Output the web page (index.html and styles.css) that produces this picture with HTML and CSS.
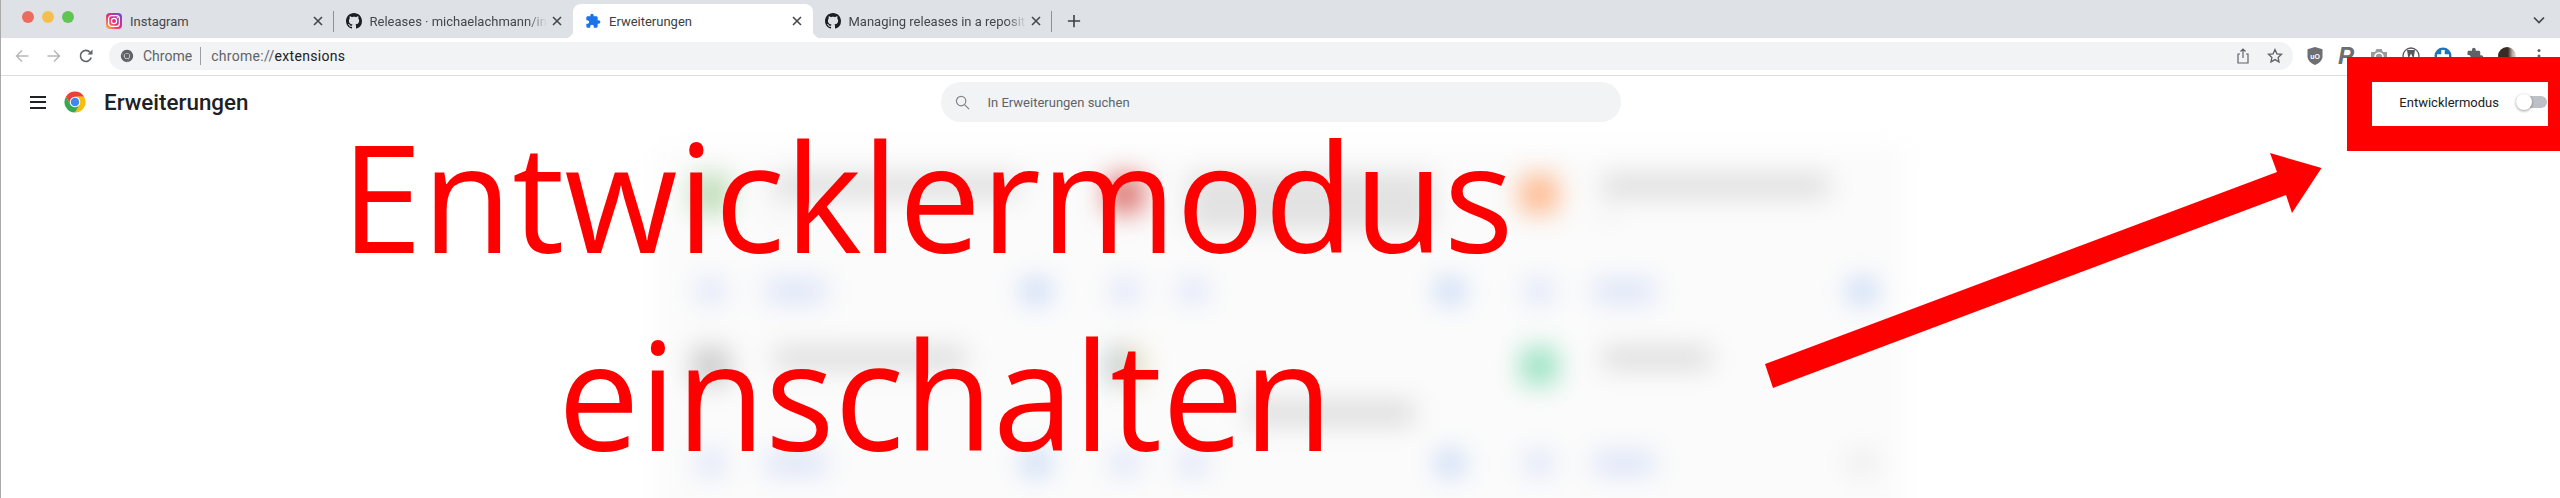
FILE: index.html
```html
<!DOCTYPE html>
<html lang="de">
<head>
    <meta charset="UTF-8">
    <title>Erweiterungen</title>
    <link rel="stylesheet" href="styles.css">
</head>
<body>

    <!-- shared icons -->
    <svg class="defs" width="0" height="0">
        <symbol id="github" viewBox="0 0 16 16">
            <path d="M8 0C3.58 0 0 3.58 0 8c0 3.54 2.29 6.53 5.47 7.59.4.07.55-.17.55-.38 0-.19-.01-.82-.01-1.49-2.01.37-2.53-.49-2.69-.94-.09-.23-.48-.94-.82-1.13-.28-.15-.68-.52-.01-.53.63-.01 1.08.58 1.23.82.72 1.21 1.87.87 2.33.66.07-.52.28-.87.51-1.07-1.78-.2-3.64-.89-3.64-3.95 0-.87.31-1.59.82-2.15-.08-.2-.36-1.02.08-2.12 0 0 .67-.21 2.2.82.64-.18 1.32-.27 2-.27.68 0 1.36.09 2 .27 1.53-1.04 2.2-.82 2.2-.82.44 1.1.16 1.92.08 2.12.51.56.82 1.27.82 2.15 0 3.07-1.87 3.75-3.65 3.95.29.25.54.73.54 1.48 0 1.07-.01 1.93-.01 2.2 0 .21.15.46.55.38A8.013 8.013 0 0016 8c0-4.42-3.58-8-8-8z"/>
        </symbol>
        <symbol id="puzzle" viewBox="0 0 24 24">
            <path d="M20.5 11H19V7c0-1.1-.9-2-2-2h-4V3.5C13 2.12 11.88 1 10.5 1S8 2.12 8 3.5V5H4c-1.1 0-1.99.9-1.99 2v3.8H3.5c1.49 0 2.7 1.21 2.7 2.7s-1.21 2.7-2.7 2.7H2V20c0 1.1.9 2 2 2h3.8v-1.5c0-1.49 1.21-2.7 2.7-2.7 1.49 0 2.7 1.21 2.7 2.7V22H17c1.1 0 2-.9 2-2v-4h1.5c1.38 0 2.5-1.12 2.5-2.5S21.88 11 20.5 11z"/>
        </symbol>
        <symbol id="close" viewBox="0 0 16 16">
            <path d="M4 4l8 8M12 4l-8 8" fill="none" stroke="currentColor" stroke-width="1.6"/>
        </symbol>
        <symbol id="chrome" viewBox="0 0 48 48">
            <path class="c-red" d="M24 13.5H42.2A21 21 0 0 0 5.8 13.5L14.91 29.25A10.5 10.5 0 0 1 24 13.5z"/>
            <path class="c-yellow" d="M33.09 29.25L24 45A21 21 0 0 0 42.2 13.5H24A10.5 10.5 0 0 1 33.09 29.25z"/>
            <path class="c-green" d="M14.91 29.25L5.8 13.5A21 21 0 0 0 24 45L33.09 29.25A10.5 10.5 0 0 1 14.91 29.25z"/>
            <circle class="c-blue" cx="24" cy="24" r="8.5"/>
        </symbol>
    </svg>

    <div class="window">

        <!-- tab strip -->
        <div class="tabstrip">
            <div class="lights">
                <span class="light red"></span>
                <span class="light yellow"></span>
                <span class="light green"></span>
            </div>
            <div class="tab sep">
                <svg class="favicon" viewBox="0 0 16 16">
                    <defs>
                        <linearGradient id="insta" x1="0" y1="1" x2="1" y2="0">
                            <stop offset="0" stop-color="#fdc03c"/>
                            <stop offset=".45" stop-color="#ee2a7b"/>
                            <stop offset="1" stop-color="#5b51d8"/>
                        </linearGradient>
                    </defs>
                    <rect width="16" height="16" rx="4" fill="url(#insta)"/>
                    <rect x="2.6" y="2.6" width="10.8" height="10.8" rx="3" fill="none" stroke="#fff" stroke-width="1.2"/>
                    <circle cx="8" cy="8" r="2.6" fill="none" stroke="#fff" stroke-width="1.2"/>
                    <circle cx="11.4" cy="4.6" r=".7" fill="#fff"/>
                </svg>
                <span class="tab-title plain">Instagram</span>
                <svg class="tab-close"><use href="#close"/></svg>
            </div>
            <div class="tab">
                <svg class="favicon"><use href="#github"/></svg>
                <span class="tab-title">Releases · michaelachmann/ins</span>
                <svg class="tab-close"><use href="#close"/></svg>
            </div>
            <div class="tab active">
                <svg class="favicon puzzle-fav"><use href="#puzzle"/></svg>
                <span class="tab-title plain">Erweiterungen</span>
                <svg class="tab-close"><use href="#close"/></svg>
            </div>
            <div class="tab sep">
                <svg class="favicon"><use href="#github"/></svg>
                <span class="tab-title">Managing releases in a reposit</span>
                <svg class="tab-close"><use href="#close"/></svg>
            </div>
            <svg class="newtab" viewBox="0 0 16 16"><path d="M8 1v14M1 8h14" fill="none" stroke="#3c4043" stroke-width="1.8"/></svg>
            <svg class="tabmenu" viewBox="0 0 16 16"><path d="M3 5.5l5 5 5-5" fill="none" stroke="#45474a" stroke-width="1.7"/></svg>
        </div>

        <!-- toolbar -->
        <div class="toolbar">
            <svg class="tool off" viewBox="0 0 16 16"><path d="M14.5 8H2.5M8 2.5L2.5 8 8 13.5" fill="none" stroke="currentColor" stroke-width="1.5"/></svg>
            <svg class="tool off" viewBox="0 0 16 16"><path d="M1.5 8h12M8 2.5L13.5 8 8 13.5" fill="none" stroke="currentColor" stroke-width="1.5"/></svg>
            <svg class="tool" viewBox="0 0 16 16"><path d="M13.2 9.5A5.5 5.5 0 1 1 12 4.2" fill="none" stroke="currentColor" stroke-width="1.6"/><path d="M14.5 1.5v5h-5z" fill="currentColor"/></svg>

            <div class="omnibox">
                <svg class="omni-icon"><use href="#chrome"/></svg>
                <span class="omni-origin">Chrome</span>
                <span class="omni-url">chrome://<b>extensions</b></span>
                <svg class="omni-action" viewBox="0 0 16 16"><path d="M5 6H3v9h10V6h-2M8 10V1M5.5 3.5L8 1l2.5 2.5" fill="none" stroke="currentColor" stroke-width="1.2"/></svg>
                <svg class="omni-action star" viewBox="0 0 16 16"><path d="M8 1.6l1.9 4.2 4.6.5-3.4 3.1.9 4.5-4-2.3-4 2.3.9-4.5L1.5 6.3l4.6-.5z" fill="none" stroke="currentColor" stroke-width="1.3"/></svg>
            </div>

            <div class="ext-icons">
                <svg class="ext" viewBox="0 0 18 18">
                    <path d="M9 0l7.5 2.2v7c0 4-3.2 7-7.5 8.8C4.7 16.2 1.5 13.2 1.5 9.2v-7z" fill="#6d6f72"/>
                    <text class="ublock" x="9" y="11.5">uO</text>
                </svg>
                <span class="ext ext-p">P</span>
                <svg class="ext" viewBox="0 0 18 18">
                    <path d="M1 5h4l1.5-3h5L13 5h4v12H1z" fill="#9a9c9f"/>
                    <circle cx="9" cy="10" r="4" fill="none" stroke="#fff" stroke-width="1.6"/>
                </svg>
                <svg class="ext" viewBox="0 0 18 18">
                    <circle cx="9" cy="9" r="8" fill="#fff" stroke="#55585c" stroke-width="1.3"/>
                    <path d="M5 3l1.5 9L9 6.5 11.5 12 13 3z" fill="#55585c"/>
                </svg>
                <svg class="ext" viewBox="0 0 18 18">
                    <circle cx="9" cy="9" r="8.5" fill="#1f74bd"/>
                    <path d="M9 3v12M3 9h12" stroke="#fff" stroke-width="3.5"/>
                </svg>
                <svg class="ext ext-puzzle"><use href="#puzzle"/></svg>
                <div class="ext avatar"></div>
                <svg class="ext dots" viewBox="0 0 18 18">
                    <circle cx="9" cy="3.5" r="1.5"/><circle cx="9" cy="9" r="1.5"/><circle cx="9" cy="14.5" r="1.5"/>
                </svg>
            </div>
        </div>

        <!-- extensions page -->
        <div class="page">
            <header class="page-head">
                <div class="head-left">
                    <div class="burger"><span></span><span></span><span></span></div>
                    <svg class="logo"><use href="#chrome"/></svg>
                    <h1>Erweiterungen</h1>
                </div>
                <div class="search">
                    <svg class="search-icon" viewBox="0 0 16 16"><circle cx="6.5" cy="6.5" r="5" fill="none" stroke="currentColor" stroke-width="1.3"/><path d="M10.2 10.2L15 15" stroke="currentColor" stroke-width="1.3"/></svg>
                    <span>In Erweiterungen suchen</span>
                </div>
                <div class="head-right">
                    <span>Entwicklermodus</span>
                    <div class="toggle"><div class="knob"></div></div>
                </div>
            </header>

            <!-- blurred cards -->
            <div class="cards">
                <div class="cards-grid">
                    <div class="card">
                        <div class="card-head"><div class="card-icon i-green"></div>
                            <div class="card-text t-long"><div class="bar"></div><div class="bar light"></div></div></div>
                        <div class="card-btns"><div class="btn"></div><div class="btn pale"></div><div class="btn pale wide"></div></div>
                    </div>
                    <div class="card">
                        <div class="card-head"><div class="card-icon i-red"></div>
                            <div class="card-text t-long"><div class="bar"></div><div class="bar dark"></div></div></div>
                        <div class="card-btns"><div class="btn"></div><div class="btn pale"></div><div class="btn pale"></div></div>
                    </div>
                    <div class="card">
                        <div class="card-head"><div class="card-icon i-orange"></div>
                            <div class="card-text"><div class="bar"></div><div class="bar light"></div></div></div>
                        <div class="card-btns"><div class="btn"></div><div class="btn pale"></div><div class="btn pale wide"></div><div class="btn end"></div></div>
                    </div>
                    <div class="card">
                        <div class="card-head"><div class="card-icon i-gray"></div>
                            <div class="card-text t-mid"><div class="bar"></div></div></div>
                        <div class="card-btns"><div class="btn"></div><div class="btn pale"></div><div class="btn pale wide"></div></div>
                    </div>
                    <div class="card">
                        <div class="card-head"><div class="card-icon i-blue"></div>
                            <div class="card-text t-low"><div class="bar light"></div><div class="bar dark"></div></div></div>
                        <div class="card-btns"><div class="btn"></div><div class="btn pale"></div><div class="btn pale"></div></div>
                    </div>
                    <div class="card">
                        <div class="card-head"><div class="card-icon i-mint"></div>
                            <div class="card-text t-short"><div class="bar"></div></div></div>
                        <div class="card-btns"><div class="btn"></div><div class="btn pale"></div><div class="btn pale wide"></div><div class="btn end gray"></div></div>
                    </div>
                </div>
            </div>
        </div>

        <!-- annotation drawn on top of the screenshot -->
        <div class="mark-box"></div>
        <svg class="mark-arrow" width="2560" height="498">
            <polygon points="1765,364 2277,172 2270,153 2321.5,168 2292,213 2286,195 1773,388" fill="#f00"/>
        </svg>
        <div class="headline">
            <span class="line-one">Entwicklermodus</span>
            <span class="line-two">einschalten</span>
        </div>
    </div>

</body>
</html>
```

FILE: styles.css
```css
* {
    box-sizing: border-box;
}
html, body {
    margin: 0;
    height: 498px;
    overflow: hidden;
    background: #fff;
}
body {
    font-family: Roboto, "Liberation Sans", sans-serif;
    color: #202124;
}
.defs {
    position: absolute;
}
.window {
    height: 498px;
    border-left: 1px solid #a9a9a9;
}

/* tab strip */
.tabstrip {
    display: flex;
    align-items: flex-end;
    height: 38px;
    padding-left: 93px;
    background: #dee1e6;
}
.lights {
    position: absolute;
    left: 22px;
    top: 11px;
    display: flex;
    gap: 8px;
}
.light {
    width: 12px;
    height: 12px;
    border-radius: 50%;
}
.light.red { background: #ed6a5e; }
.light.yellow { background: #f4bf4f; }
.light.green { background: #61c554; }

.tab {
    position: relative;
    display: flex;
    align-items: center;
    width: 239.5px;
    height: 34px;
    padding: 0 8px 0 12px;
    font-size: 13px;
    color: #45474a;
}
.tab.sep::after {
    content: "";
    position: absolute;
    right: 0;
    top: 7px;
    width: 1px;
    height: 21px;
    background: #8e9195;
}
.tab.active {
    background: #fff;
    border-radius: 8px 8px 0 0;
    color: #3c4043;
}
.tab.active::before,
.tab.active::after {
    content: "";
    position: absolute;
    bottom: 0;
    width: 8px;
    height: 8px;
}
.tab.active::before {
    left: -8px;
    background: radial-gradient(circle at 0 0, transparent 8px, #fff 8.5px);
}
.tab.active::after {
    right: -8px;
    background: radial-gradient(circle at 100% 0, transparent 8px, #fff 8.5px);
}
.favicon {
    flex: none;
    width: 16px;
    height: 16px;
    margin-right: 8px;
    fill: #1b1f23;
}
.puzzle-fav {
    fill: #1a73e8;
}
.tab-title {
    flex: 1;
    min-width: 0;
    white-space: nowrap;
    -webkit-mask-image: linear-gradient(to right, #000 88%, transparent 99%);
    mask-image: linear-gradient(to right, #000 88%, transparent 99%);
}
.tab-title.plain {
    -webkit-mask-image: none;
    mask-image: none;
}
.tab-close {
    flex: none;
    width: 16px;
    height: 16px;
    color: #45474a;
}
.newtab {
    width: 14px;
    height: 14px;
    margin: 0 0 10px 15px;
}
.tabmenu {
    width: 16px;
    height: 16px;
    margin: 0 13px 10px auto;
}

/* toolbar */
.toolbar {
    display: flex;
    align-items: center;
    height: 38px;
    padding: 0 0 1px 13px;
    background: #fff;
    border-bottom: 1px solid #dadce0;
    color: #5f6368;
}
.tool {
    flex: none;
    width: 16px;
    height: 16px;
    margin-right: 16px;
    color: #5f6368;
}
.tool.off {
    color: #b6b8bb;
}
.omnibox {
    display: flex;
    align-items: center;
    width: 2184px;
    height: 28px;
    margin-left: -1px;
    padding: 0 10px 0 11px;
    border-radius: 14px;
    background: #f1f3f4;
    font-size: 14px;
}
.omni-icon {
    --red: #5f6368;
    --yellow: #5f6368;
    --green: #5f6368;
    --blue: #5f6368;
    width: 14px;
    height: 14px;
    margin-right: 9px;
}
.omni-origin {
    padding-right: 8px;
    border-right: 1px solid #9aa0a6;
    line-height: 18px;
}
.omni-url {
    margin: 0 auto 0 10px;
    letter-spacing: .3px;
}
.omni-url b {
    font-weight: 400;
    color: #202124;
}
.omni-action {
    flex: none;
    width: 16px;
    height: 16px;
    margin-left: 16px;
    color: #5f6368;
}
.c-red { fill: var(--red, #ea4335); }
.c-yellow { fill: var(--yellow, #fbbc05); }
.c-green { fill: var(--green, #34a853); }
.c-blue { fill: var(--blue, #4285f4); }

.ext-icons {
    display: flex;
    align-items: center;
    gap: 14px;
    margin-left: 13px;
}
.ext {
    flex: none;
    width: 18px;
    height: 18px;
}
.ublock {
    font: 700 7px "Liberation Sans", sans-serif;
    fill: #fff;
    text-anchor: middle;
}
.ext-p {
    font: italic 700 24px/18px "Liberation Sans", sans-serif;
    color: #6b6e72;
}
.ext-puzzle {
    fill: #5f6368;
}
.avatar {
    border-radius: 50%;
    background: linear-gradient(to right, #3a2c25 0, #3a2c25 55%, #b9aca3 80%, #e6e1dc 100%);
}
.dots {
    fill: #5f6368;
}

/* page */
.page {
    height: 422px;
    overflow: hidden;
}
.page-head {
    display: grid;
    grid-template-columns: 1fr 680px 1fr;
    align-items: center;
    height: 52px;
    margin-bottom: 19px;
}
.head-left {
    display: flex;
    align-items: center;
    padding-left: 29px;
}
.burger {
    display: flex;
    flex-direction: column;
    gap: 3.5px;
    width: 16px;
    margin-right: 17px;
}
.burger span {
    height: 2px;
    background: #202124;
}
.logo {
    width: 24px;
    height: 24px;
    margin-right: 17px;
}
h1 {
    margin: 0;
    font-size: 22.4px;
    font-weight: 500;
    color: #202124;
}
.search {
    display: flex;
    align-items: center;
    height: 40px;
    padding-left: 14px;
    border-radius: 20px;
    background: #f1f3f4;
    font-size: 13px;
    color: #5f6368;
}
.search-icon {
    width: 15px;
    height: 15px;
    margin-right: 18px;
    color: #80868b;
}
.head-right {
    display: flex;
    align-items: center;
    justify-content: flex-end;
    padding-right: 13px;
    font-size: 13px;
    color: #202124;
}
.toggle {
    position: relative;
    width: 31px;
    height: 12px;
    margin-left: 17px;
    border-radius: 6px;
    background: #bdc1c6;
}
.knob {
    position: absolute;
    left: 0;
    top: -2px;
    width: 16px;
    height: 16px;
    border-radius: 50%;
    background: #fff;
    box-shadow: 0 1px 3px rgba(0, 0, 0, .4);
}

/* blurred cards behind the annotation */
.cards {
    width: 1248px;
    height: 380px;
    margin: 0 auto;
    overflow: hidden;
    background: #fbfbfb;
    filter: blur(13px);
}
.cards-grid {
    display: grid;
    grid-template-columns: repeat(3, 414px);
    margin-left: -53px;
}
.card {
    height: 172px;
    padding: 28px 0 0 4px;
}
.card-head {
    display: flex;
    height: 40px;
    padding-left: 84px;
}
.card-icon {
    flex: none;
    width: 38px;
    height: 38px;
    border-radius: 6px;
}
.i-green { background: #bddcb6; }
.i-red { background: #dc7570; }
.i-orange { background: #fdb88d; }
.i-gray { background: #cccccc; }
.i-blue { background: linear-gradient(to right, #b6c7da, #eee3b8); }
.i-mint { background: #9ce3c3; }

.card-text {
    flex: 1;
    margin-left: 44px;
    padding-right: 17px;
}
.card-text.t-long {
    padding-right: 0;
}
.card-text.t-mid {
    padding-right: 52px;
}
.card-text.t-short {
    padding-right: 135px;
}
.card-text.t-low {
    padding-top: 26px;
    padding-left: 60px;
}
.bar {
    height: 22px;
    margin-bottom: 6px;
    background: #dcdcdc;
}
.bar.light {
    background: #f0f0f0;
}
.bar.dark {
    height: 24px;
    background: #dcdcdc;
}
.card-btns {
    display: grid;
    grid-template-columns: 89px 68px 62px auto;
    margin-top: 64px;
}
.btn {
    width: 28px;
    height: 24px;
    border-radius: 4px;
    background: #c4d7f6;
}
.btn.pale {
    background: #dce4f8;
}
.btn.wide {
    width: 62px;
}
.btn.end {
    margin-left: 193px;
}
.btn.gray {
    background: #ececec;
}

/* annotation */
.mark-box {
    position: absolute;
    left: 2347px;
    top: 57px;
    width: 213px;
    height: 94px;
    border: solid #f00;
    border-width: 25px 12px 25px 25px;
}
.mark-arrow {
    position: absolute;
    left: 0;
    top: 0;
}
.headline {
    position: absolute;
    left: 341px;
    top: 96px;
    font-family: "Open Sans", sans-serif;
    font-size: 150px;
    line-height: 198px;
    color: #f00;
    white-space: nowrap;
}
.line-one,
.line-two {
    display: block;
    transform-origin: left top;
}
.line-one {
    transform: scaleX(.976);
}
.line-two {
    margin-left: 217px;
    transform: scaleX(.968);
}
```
